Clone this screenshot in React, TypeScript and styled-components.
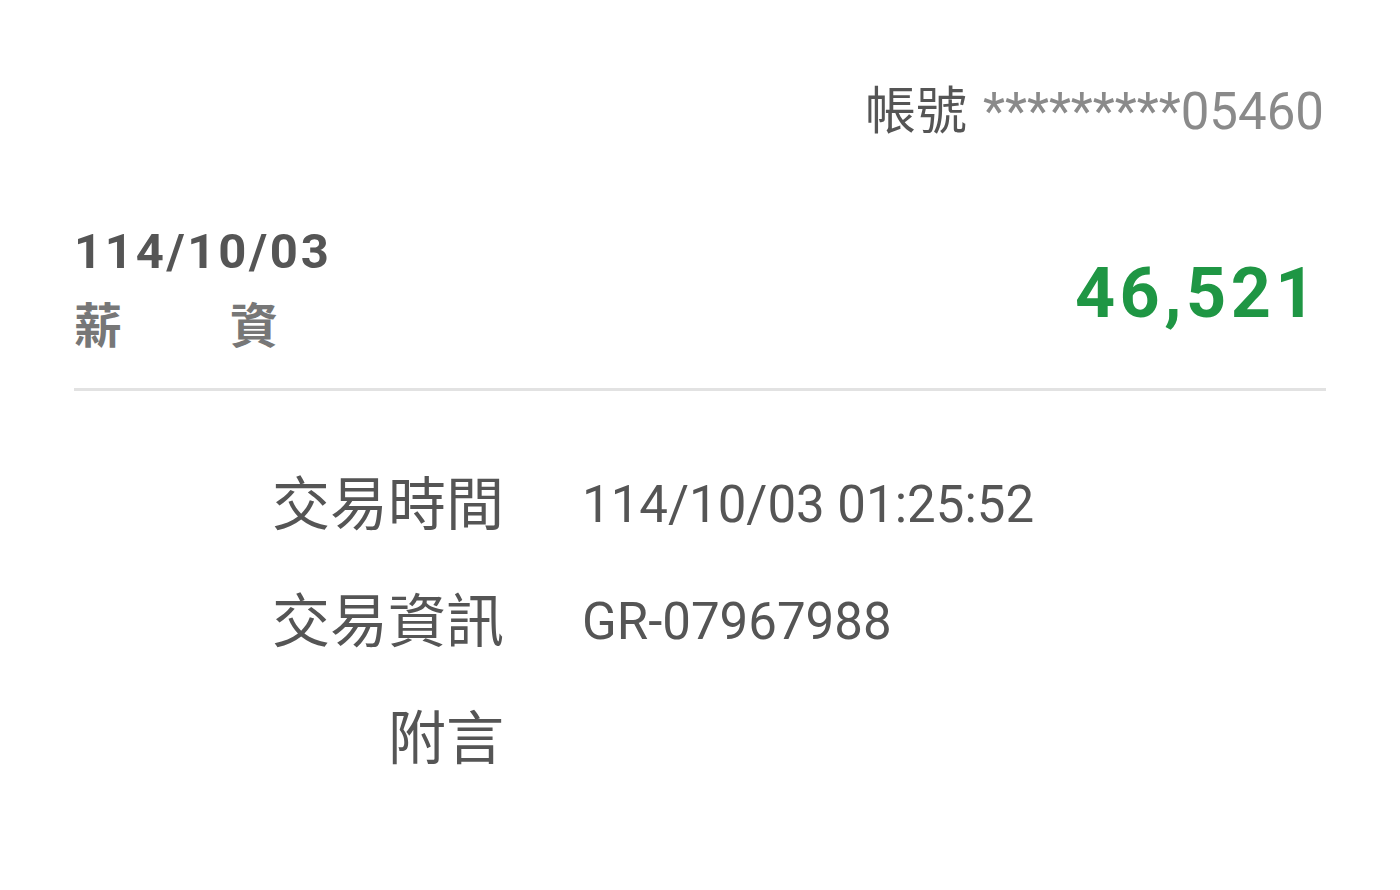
import { Fragment } from 'react';
import styled, { createGlobalStyle } from 'styled-components';

const GlobalStyle = createGlobalStyle`
  body {
    margin: 0;
    background: #fff;
    font-family: Roboto, "Noto Sans CJK TC", sans-serif;
  }
`;

const Page = styled.div`
  width: 1400px;
  height: 890px;
  box-sizing: border-box;
  padding: 82px 74px 0 74px;
  background: #fff;
  overflow: hidden;
`;

const AccountLine = styled.div`
  display: flex;
  justify-content: flex-end;
  align-items: baseline;
  gap: 16px;
  font-size: 51px;
  line-height: 60px;
  padding-right: 2px;
`;

const AccountLabel = styled.span`
  color: #555;
`;

const AccountNo = styled.span`
  color: #8a8a8a;
`;

const Summary = styled.div`
  display: flex;
  justify-content: space-between;
  align-items: center;
  margin-top: 80px;
`;

const SummaryLeft = styled.div`
  display: flex;
  flex-direction: column;
  gap: 15px;
`;

const DateText = styled.div`
  font-weight: 700;
  font-size: 49px;
  line-height: 60px;
  letter-spacing: 2.7px;
  color: #555;
`;

const Category = styled.div`
  font-weight: 700;
  font-size: 48px;
  line-height: 60px;
  letter-spacing: 4px;
  color: #777;
`;

const Amount = styled.div`
  font-weight: 700;
  font-size: 70px;
  line-height: 80px;
  letter-spacing: 4.5px;
  color: #1f9644;
  padding: 6px 6px 0 0;
`;

const Rule = styled.hr`
  margin: 31px 0 0 0;
  border: none;
  border-top: 3px solid #e2e2e2;
`;

const Details = styled.div`
  display: grid;
  grid-template-columns: 430px 1fr;
  grid-auto-rows: 117px;
  column-gap: 78px;
  margin-top: 55px;
  align-items: center;
`;

const Label = styled.div`
  text-align: right;
  font-size: 58px;
  line-height: 70px;
  color: #555;
`;

const Value = styled.div`
  font-size: 51px;
  line-height: 70px;
  color: #555;
`;

const rows: [string, string][] = [
  ['交易時間', '114/10/03 01:25:52'],
  ['交易資訊', 'GR-07967988'],
  ['附言', ''],
];

export default function App() {
  return (
    <>
      <GlobalStyle />
      <Page>
        <AccountLine>
          <AccountLabel>帳號</AccountLabel>
          <AccountNo>*********05460</AccountNo>
        </AccountLine>
        <Summary>
          <SummaryLeft>
            <DateText>114/10/03</DateText>
            <Category>薪　　資</Category>
          </SummaryLeft>
          <Amount>46,521</Amount>
        </Summary>
        <Rule />
        <Details>
          {rows.map(([label, value]) => (
            <Fragment key={label}>
              <Label>{label}</Label>
              <Value>{value}</Value>
            </Fragment>
          ))}
        </Details>
      </Page>
    </>
  );
}
